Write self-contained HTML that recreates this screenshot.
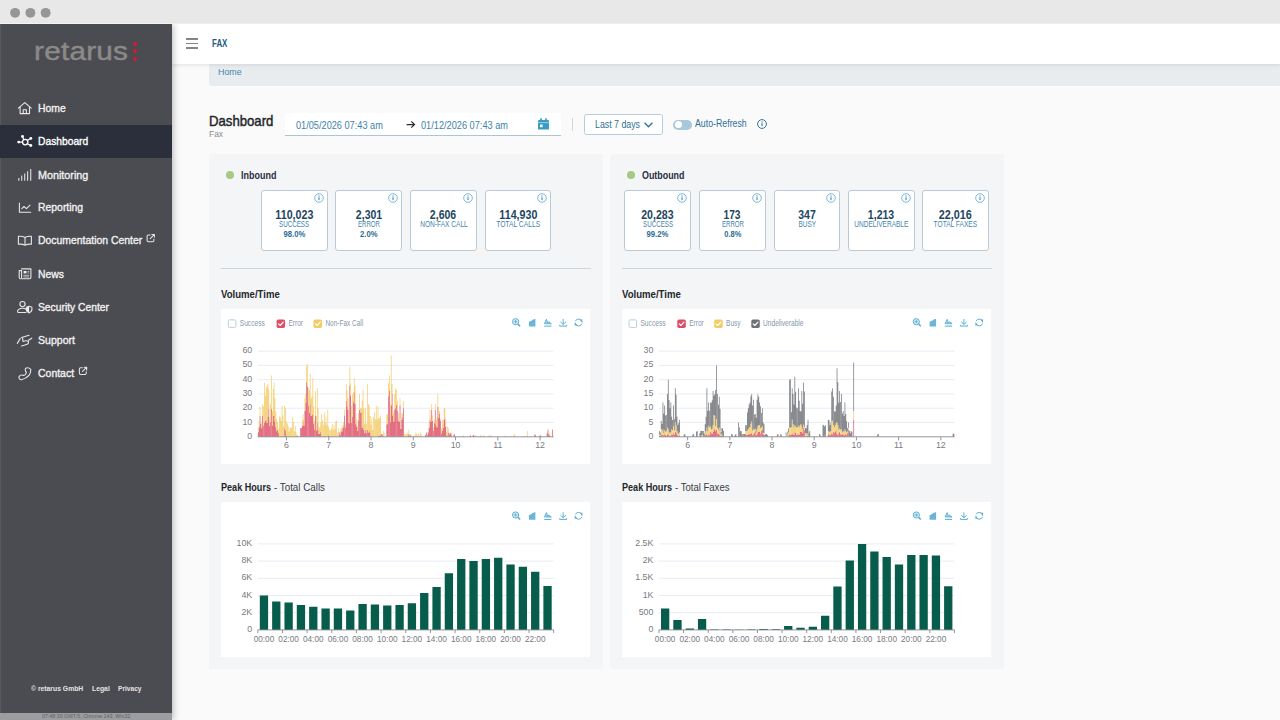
<!DOCTYPE html>
<html lang="en">
<head>
<meta charset="utf-8">
<title>retarus - Fax Dashboard</title>
<style>
html,body{margin:0;padding:0;}
body{width:1280px;height:720px;overflow:hidden;background:#fafafa;font-family:"Liberation Sans",sans-serif;}
#root{position:relative;width:1280px;height:720px;overflow:hidden;background:#fafafa;}
.t{position:absolute;white-space:nowrap;line-height:1;display:block;}
.b{position:absolute;box-sizing:border-box;}
svg{position:absolute;overflow:visible;}
</style>
</head>
<body>
<div id="root">
<div id="window-titlebar">
<div class="b" style="left:0.00px;top:0.00px;width:1280.00px;height:24.00px;background:#e8e8e8;"></div>
<div class="b" style="left:0.00px;top:23.00px;width:1280.00px;height:1.00px;background:#f3f3f3;"></div>
<svg style="left:0;top:0" width="60" height="24" viewBox="0 0 60 24"><circle cx="15.1" cy="12.85" r="4.95" fill="#969698"/><circle cx="30.4" cy="12.85" r="4.95" fill="#969698"/><circle cx="45.65" cy="12.85" r="4.95" fill="#969698"/></svg>
</div>
<header id="app-header">
<div class="b" style="left:172.00px;top:64.00px;width:1108.00px;height:656.00px;background:#fafafa;"></div>
<div class="b" style="left:209.00px;top:64.00px;width:1080.00px;height:21.60px;background:#e9ecef;border-radius:0 0 0 3px;"></div>
<span class="t" style="left:217.70px;top:67.37px;font-size:9.60px;color:#3f86ad;transform:scaleX(0.9216);transform-origin:left center;">Home</span>
<div class="b" style="left:172.00px;top:24.00px;width:1108.00px;height:40.00px;background:#fff;box-shadow:0 1px 4px rgba(0,0,0,0.10);"></div>
<div class="b" style="left:185.60px;top:38.40px;width:12.40px;height:1.40px;background:#83848a;"></div>
<div class="b" style="left:185.60px;top:42.80px;width:12.40px;height:1.40px;background:#83848a;"></div>
<div class="b" style="left:185.60px;top:47.20px;width:12.40px;height:1.40px;background:#83848a;"></div>
<span class="t" style="left:211.50px;top:38.87px;font-size:10.20px;color:#1d5c86;font-weight:bold;transform:scaleX(0.7763);transform-origin:left center;">FAX</span>
</header>
<aside id="sidebar"><nav>
<div class="b" style="left:0;top:24px;width:200px;height:696px;overflow:hidden;"><div class="b" style="left:0;top:0;width:172.3px;height:696px;background:#4b4c51;box-shadow:1px 0 7px rgba(0,0,0,0.28);"></div></div>
<div class="b" style="left:0.00px;top:24.00px;width:1.00px;height:696.00px;background:#58595e;"></div>
<div class="b" style="left:0.00px;top:124.70px;width:172.30px;height:33.10px;background:#2a2f3b;"></div>
<span class="t" style="left:34.10px;top:38.71px;font-size:25.50px;color:#8b8a87;-webkit-text-stroke:0.45px #8b8a87;transform:scaleX(1.1667);transform-origin:left center;letter-spacing:0.2px;">retarus</span>
<div class="b" style="left:132.50px;top:41.70px;width:4.20px;height:4.20px;background:#d8192f;border-radius:50%;"></div>
<div class="b" style="left:132.50px;top:49.20px;width:4.20px;height:4.20px;background:#d8192f;border-radius:50%;"></div>
<div class="b" style="left:132.50px;top:56.70px;width:4.20px;height:4.20px;background:#d8192f;border-radius:50%;"></div>
<span class="t" style="left:38.00px;top:102.82px;font-size:11.20px;color:#f1f1f1;-webkit-text-stroke:0.35px #f1f1f1;transform:scaleX(0.9305);transform-origin:left center;">Home</span>
<span class="t" style="left:38.00px;top:136.12px;font-size:11.20px;color:#ffffff;-webkit-text-stroke:0.35px #ffffff;transform:scaleX(0.9180);transform-origin:left center;">Dashboard</span>
<span class="t" style="left:38.00px;top:169.62px;font-size:11.20px;color:#f1f1f1;-webkit-text-stroke:0.35px #f1f1f1;transform:scaleX(0.9619);transform-origin:left center;">Monitoring</span>
<span class="t" style="left:38.00px;top:202.42px;font-size:11.20px;color:#f1f1f1;-webkit-text-stroke:0.35px #f1f1f1;transform:scaleX(0.9307);transform-origin:left center;">Reporting</span>
<span class="t" style="left:38.00px;top:235.12px;font-size:11.20px;color:#f1f1f1;-webkit-text-stroke:0.35px #f1f1f1;transform:scaleX(0.9307);transform-origin:left center;">Documentation Center</span>
<span class="t" style="left:38.00px;top:268.52px;font-size:11.20px;color:#f1f1f1;-webkit-text-stroke:0.35px #f1f1f1;transform:scaleX(0.9284);transform-origin:left center;">News</span>
<span class="t" style="left:38.00px;top:302.12px;font-size:11.20px;color:#f1f1f1;-webkit-text-stroke:0.35px #f1f1f1;transform:scaleX(0.9198);transform-origin:left center;">Security Center</span>
<span class="t" style="left:38.00px;top:334.92px;font-size:11.20px;color:#f1f1f1;-webkit-text-stroke:0.35px #f1f1f1;transform:scaleX(0.9432);transform-origin:left center;">Support</span>
<span class="t" style="left:38.00px;top:367.92px;font-size:11.20px;color:#f1f1f1;-webkit-text-stroke:0.35px #f1f1f1;transform:scaleX(0.9353);transform-origin:left center;">Contact</span>
<span class="t" style="left:31.20px;top:685.04px;font-size:7.40px;color:#e4e4e4;font-weight:bold;transform:scaleX(0.9199);transform-origin:left center;">© retarus GmbH</span>
<span class="t" style="left:91.70px;top:685.04px;font-size:7.40px;color:#e4e4e4;font-weight:bold;transform:scaleX(0.9209);transform-origin:left center;">Legal</span>
<span class="t" style="left:117.70px;top:685.04px;font-size:7.40px;color:#e4e4e4;font-weight:bold;transform:scaleX(0.8924);transform-origin:left center;">Privacy</span>
<div class="b" style="left:0.00px;top:712.50px;width:172.30px;height:7.50px;background:#9b9da0;"></div>
<span class="t" style="left:42.00px;top:714.26px;font-size:5.60px;color:#5d5f63;transform:scaleX(0.9477);transform-origin:left center;">07:48:30 GMT-5, Chrome 143, Win32</span>
<svg style="left:0;top:0" width="172" height="720" viewBox="0 0 172 720" fill="none" stroke="#e6e6e6" stroke-width="1.1" stroke-linecap="round" stroke-linejoin="round">
<path d="M18.4 108.1L24.8 102.6L31.2 108.1M20.1 107.2V113.6H29.5V107.2M23.2 113.6V109.7H26.4V113.6"/>
<g stroke="#fff"><circle cx="25.2" cy="142.1" r="2.7" stroke-width="1.3"/><path d="M22.5 142.1H19.4M23.9 139.8L22.8 137.3M27.3 140.4L30.2 138.7M27.3 143.8L30.2 145.2" stroke-width="1.2"/></g>
<g fill="#fff" stroke="none"><circle cx="18.7" cy="142.1" r="1.45"/><circle cx="22.5" cy="136.5" r="1.45"/><circle cx="30.8" cy="138.4" r="1.45"/><circle cx="30.8" cy="145.5" r="1.45"/></g>
<path d="M18.8 180.8V178.1M21.7 180.8V175.6M24.7 180.8V173.4M27.6 180.8V171.3M30.7 180.8V169" stroke="#d9d9d9" stroke-width="1.15" stroke-linecap="butt"/>
<path d="M19.4 203V212.2H30.7M21.8 208.7L24 206.5L26.4 208.6L30 205.1"/>
<path d="M25 237.4Q22 235.9 18.4 236.4V244.3Q22 243.8 25 245.2Q28 243.8 31.4 244.3V236.4Q28 235.9 25 237.4ZM25 237.4V245"/>
<path d="M21.6 268.9H30.9V277.6Q30.9 278.8 29.7 278.8H20.4Q19.2 278.8 19.2 277.6V270.6H21.6V277.4"/>
<rect x="23.6" y="271" width="2.9" height="2.4" fill="#f0f0f0" stroke="none"/><path d="M23.8 275.3H28.8M23.8 277H28.8M27.9 271.4H28.8M27.9 273H28.8" stroke-width="0.9" stroke="#cfcfcf"/>
<circle cx="22.5" cy="304.1" r="2.6"/><path d="M26.3 309.2Q24.8 308.2 22.5 308.2Q18.2 308.2 17.5 311.4Q17.4 312.5 18.5 312.5H26"/>
<path d="M29.1 306.3L31.9 307.3V309.6Q31.9 311.8 29.1 312.9Q26.3 311.8 26.3 309.6V307.3Z"/><path d="M29.1 306.6V312.6Q26.6 311.6 26.6 309.6V307.5Z" fill="#f0f0f0" stroke="none"/>
<path d="M17.3 343.4L20.3 338.4M21.6 337.5L29 335.2M22.6 338.1L23 341.4Q26.8 340.1 28.4 341.5Q29.2 343.9 25.6 344.8L21.6 346M31.8 338.2L28.6 340.3"/>
<path d="M25.6 368.2Q28.5 366.8 30.8 369.3Q31.3 377 21.5 379.7Q18.6 379.6 19 376.6Q20.5 374.3 22.8 375.2Q24.5 375.8 25.6 374.2Q27 372.4 25.5 371Q24.7 369.5 25.6 368.2Z"/>
<path d="M150.00 234.90H148.30Q147.10 234.90 147.10 236.10V240.50Q147.10 241.70 148.30 241.70H152.70Q153.90 241.70 153.90 240.50V238.90" stroke-width="1.05"/>
<path d="M150.20 238.60L154.20 234.60M151.80 234.50H154.40V237.10" stroke-width="1.05"/>
<path d="M82.30 367.70H80.60Q79.40 367.70 79.40 368.90V373.30Q79.40 374.50 80.60 374.50H85.00Q86.20 374.50 86.20 373.30V371.70" stroke-width="1.05"/>
<path d="M82.50 371.40L86.50 367.40M84.10 367.30H86.70V369.90" stroke-width="1.05"/>
</svg>
</nav></aside>
<main id="dashboard">
<span class="t" style="left:209.00px;top:113.71px;font-size:14.40px;color:#24262b;-webkit-text-stroke:0.45px #24262b;transform:scaleX(0.9141);transform-origin:left center;">Dashboard</span>
<span class="t" style="left:209.00px;top:129.47px;font-size:9.60px;color:#8b8d92;transform:scaleX(0.8748);transform-origin:left center;">Fax</span>
<div class="b" style="left:284.70px;top:113.30px;width:276.10px;height:22.40px;background:#fff;border-bottom:1px solid #a9c6d6;border-radius:2px 2px 0 0;"></div>
<span class="t" style="left:296.00px;top:120.94px;font-size:10.00px;color:#4083ab;transform:scaleX(0.9183);transform-origin:left center;">01/05/2026 07:43 am</span>
<span class="t" style="left:421.00px;top:120.94px;font-size:10.00px;color:#4083ab;transform:scaleX(0.9204);transform-origin:left center;">01/12/2026 07:43 am</span>
<svg style="left:406.4px;top:119.7px" width="10" height="9" viewBox="0 0 10 9"><path d="M0.6 4.5H8.3M5.3 1.4L8.5 4.5L5.3 7.6" fill="none" stroke="#2b2d33" stroke-width="1.25"/></svg>
<svg style="left:537.5px;top:118.2px" width="11" height="12" viewBox="0 0 11 12"><path d="M0 3.2Q0 2 1.2 2H9.8Q11 2 11 3.2V10.4Q11 11.6 9.8 11.6H1.2Q0 11.6 0 10.4Z" fill="#3a9cc5"/><rect x="2.2" y="0.2" width="1.7" height="3" rx="0.5" fill="#3a9cc5"/><rect x="7.1" y="0.2" width="1.7" height="3" rx="0.5" fill="#3a9cc5"/><rect x="0" y="4.2" width="11" height="0.9" fill="#fff" opacity="0.55"/><rect x="2" y="6.6" width="2.6" height="2.6" fill="#fff"/></svg>
<div class="b" style="left:572.20px;top:118.00px;width:1.00px;height:13.00px;background:#d3d7db;"></div>
<div class="b" style="left:584.30px;top:113.70px;width:78.50px;height:21.20px;background:#fff;border:1px solid #b5cedb;border-radius:2.5px;"></div>
<span class="t" style="left:594.60px;top:119.84px;font-size:10.00px;color:#2f7098;transform:scaleX(0.8799);transform-origin:left center;">Last 7 days</span>
<svg style="left:644px;top:122px" width="9" height="6" viewBox="0 0 9 6"><path d="M0.6 0.7L4.5 4.7L8.4 0.7" fill="none" stroke="#2f7098" stroke-width="1.3"/></svg>
<div class="b" style="left:673.00px;top:120.10px;width:18.70px;height:9.50px;background:#a9c8d9;border-radius:5px;"></div>
<div class="b" style="left:674.90px;top:121.40px;width:7.00px;height:7.00px;background:#fff;border-radius:50%;"></div>
<span class="t" style="left:695.00px;top:118.63px;font-size:10.00px;color:#2f7098;transform:scaleX(0.8775);transform-origin:left center;">Auto-Refresh</span>
<svg style="left:756.00px;top:117.50px" width="12" height="12" viewBox="-6 -6 12 12"><circle r="4.40" fill="#fff" stroke="#2f7098" stroke-width="1.00"/><rect x="-0.55" y="-0.8" width="1.1" height="2.9" fill="#2f7098"/><circle cx="0" cy="-2.1" r="0.65" fill="#2f7098"/></svg>
<div class="b" style="left:209.00px;top:154.00px;width:394.00px;height:514.80px;background:#f4f5f7;border-radius:3px;"></div>
<div class="b" style="left:226.00px;top:170.80px;width:8.00px;height:8.00px;background:#a6c984;border-radius:50%;"></div>
<span class="t" style="left:240.90px;top:169.57px;font-size:10.90px;color:#2a2d44;font-weight:bold;transform:scaleX(0.8237);transform-origin:left center;">Inbound</span>
<div class="b" style="left:221.00px;top:267.60px;width:369.50px;height:1.00px;background:#ccd6de;"></div>
<div class="b" style="left:261.20px;top:190.30px;width:66.40px;height:60.40px;background:#fff;border:1px solid #b9c9d8;border-radius:3px;"></div>
<svg style="left:312.60px;top:191.50px" width="12" height="12" viewBox="-6 -6 12 12"><circle r="4.30" fill="#fff" stroke="#62aed3" stroke-width="0.85"/><rect x="-0.55" y="-0.8" width="1.1" height="2.9" fill="#3d8db8"/><circle cx="0" cy="-2.1" r="0.65" fill="#3d8db8"/></svg>
<span class="t" style="left:273.14px;top:208.84px;font-size:12.00px;color:#1e4562;font-weight:bold;transform:scaleX(0.8896);transform-origin:center center;">110,023</span>
<span class="t" style="left:274.44px;top:220.17px;font-size:8.30px;color:#3f84ad;transform:scaleX(0.7526);transform-origin:center center;">SUCCESS</span>
<span class="t" style="left:281.03px;top:229.36px;font-size:9.50px;color:#2f6d94;font-weight:bold;transform:scaleX(0.8093);transform-origin:center center;">98.0%</span>
<div class="b" style="left:335.30px;top:190.30px;width:66.40px;height:60.40px;background:#fff;border:1px solid #b9c9d8;border-radius:3px;"></div>
<svg style="left:386.70px;top:191.50px" width="12" height="12" viewBox="-6 -6 12 12"><circle r="4.30" fill="#fff" stroke="#62aed3" stroke-width="0.85"/><rect x="-0.55" y="-0.8" width="1.1" height="2.9" fill="#3d8db8"/><circle cx="0" cy="-2.1" r="0.65" fill="#3d8db8"/></svg>
<span class="t" style="left:353.59px;top:208.84px;font-size:12.00px;color:#1e4562;font-weight:bold;transform:scaleX(0.8758);transform-origin:center center;">2,301</span>
<span class="t" style="left:353.61px;top:220.17px;font-size:8.30px;color:#3f84ad;transform:scaleX(0.7340);transform-origin:center center;">ERROR</span>
<span class="t" style="left:357.77px;top:229.36px;font-size:9.50px;color:#2f6d94;font-weight:bold;transform:scaleX(0.8082);transform-origin:center center;">2.0%</span>
<div class="b" style="left:410.20px;top:190.30px;width:66.40px;height:60.40px;background:#fff;border:1px solid #b9c9d8;border-radius:3px;"></div>
<svg style="left:461.60px;top:191.50px" width="12" height="12" viewBox="-6 -6 12 12"><circle r="4.30" fill="#fff" stroke="#62aed3" stroke-width="0.85"/><rect x="-0.55" y="-0.8" width="1.1" height="2.9" fill="#3d8db8"/><circle cx="0" cy="-2.1" r="0.65" fill="#3d8db8"/></svg>
<span class="t" style="left:428.49px;top:208.84px;font-size:12.00px;color:#1e4562;font-weight:bold;transform:scaleX(0.8758);transform-origin:center center;">2,606</span>
<span class="t" style="left:413.52px;top:220.17px;font-size:8.30px;color:#3f84ad;transform:scaleX(0.7922);transform-origin:center center;">NON-FAX CALL</span>
<div class="b" style="left:484.90px;top:190.30px;width:66.40px;height:60.40px;background:#fff;border:1px solid #b9c9d8;border-radius:3px;"></div>
<svg style="left:536.30px;top:191.50px" width="12" height="12" viewBox="-6 -6 12 12"><circle r="4.30" fill="#fff" stroke="#62aed3" stroke-width="0.85"/><rect x="-0.55" y="-0.8" width="1.1" height="2.9" fill="#3d8db8"/><circle cx="0" cy="-2.1" r="0.65" fill="#3d8db8"/></svg>
<span class="t" style="left:496.84px;top:208.84px;font-size:12.00px;color:#1e4562;font-weight:bold;transform:scaleX(0.8896);transform-origin:center center;">114,930</span>
<span class="t" style="left:491.06px;top:220.17px;font-size:8.30px;color:#3f84ad;transform:scaleX(0.8106);transform-origin:center center;">TOTAL CALLS</span>
<div class="b" style="left:610.00px;top:154.00px;width:394.00px;height:514.80px;background:#f4f5f7;border-radius:3px;"></div>
<div class="b" style="left:627.00px;top:170.80px;width:8.00px;height:8.00px;background:#a6c984;border-radius:50%;"></div>
<span class="t" style="left:641.90px;top:169.57px;font-size:10.90px;color:#2a2d44;font-weight:bold;transform:scaleX(0.8164);transform-origin:left center;">Outbound</span>
<div class="b" style="left:622.00px;top:267.60px;width:369.50px;height:1.00px;background:#ccd6de;"></div>
<div class="b" style="left:624.30px;top:190.30px;width:66.40px;height:60.40px;background:#fff;border:1px solid #b9c9d8;border-radius:3px;"></div>
<svg style="left:675.70px;top:191.50px" width="12" height="12" viewBox="-6 -6 12 12"><circle r="4.30" fill="#fff" stroke="#62aed3" stroke-width="0.85"/><rect x="-0.55" y="-0.8" width="1.1" height="2.9" fill="#3d8db8"/><circle cx="0" cy="-2.1" r="0.65" fill="#3d8db8"/></svg>
<span class="t" style="left:639.25px;top:208.84px;font-size:12.00px;color:#1e4562;font-weight:bold;transform:scaleX(0.8800);transform-origin:center center;">20,283</span>
<span class="t" style="left:637.54px;top:220.17px;font-size:8.30px;color:#3f84ad;transform:scaleX(0.7526);transform-origin:center center;">SUCCESS</span>
<span class="t" style="left:644.13px;top:229.36px;font-size:9.50px;color:#2f6d94;font-weight:bold;transform:scaleX(0.8093);transform-origin:center center;">99.2%</span>
<div class="b" style="left:699.20px;top:190.30px;width:66.40px;height:60.40px;background:#fff;border:1px solid #b9c9d8;border-radius:3px;"></div>
<svg style="left:750.60px;top:191.50px" width="12" height="12" viewBox="-6 -6 12 12"><circle r="4.30" fill="#fff" stroke="#62aed3" stroke-width="0.85"/><rect x="-0.55" y="-0.8" width="1.1" height="2.9" fill="#3d8db8"/><circle cx="0" cy="-2.1" r="0.65" fill="#3d8db8"/></svg>
<span class="t" style="left:722.49px;top:208.84px;font-size:12.00px;color:#1e4562;font-weight:bold;transform:scaleX(0.8491);transform-origin:center center;">173</span>
<span class="t" style="left:717.51px;top:220.17px;font-size:8.30px;color:#3f84ad;transform:scaleX(0.7340);transform-origin:center center;">ERROR</span>
<span class="t" style="left:721.67px;top:229.36px;font-size:9.50px;color:#2f6d94;font-weight:bold;transform:scaleX(0.7851);transform-origin:center center;">0.8%</span>
<div class="b" style="left:773.70px;top:190.30px;width:66.40px;height:60.40px;background:#fff;border:1px solid #b9c9d8;border-radius:3px;"></div>
<svg style="left:825.10px;top:191.50px" width="12" height="12" viewBox="-6 -6 12 12"><circle r="4.30" fill="#fff" stroke="#62aed3" stroke-width="0.85"/><rect x="-0.55" y="-0.8" width="1.1" height="2.9" fill="#3d8db8"/><circle cx="0" cy="-2.1" r="0.65" fill="#3d8db8"/></svg>
<span class="t" style="left:796.99px;top:208.84px;font-size:12.00px;color:#1e4562;font-weight:bold;transform:scaleX(0.8740);transform-origin:center center;">347</span>
<span class="t" style="left:795.70px;top:220.17px;font-size:8.30px;color:#3f84ad;transform:scaleX(0.7742);transform-origin:center center;">BUSY</span>
<div class="b" style="left:848.20px;top:190.30px;width:66.40px;height:60.40px;background:#fff;border:1px solid #b9c9d8;border-radius:3px;"></div>
<svg style="left:899.60px;top:191.50px" width="12" height="12" viewBox="-6 -6 12 12"><circle r="4.30" fill="#fff" stroke="#62aed3" stroke-width="0.85"/><rect x="-0.55" y="-0.8" width="1.1" height="2.9" fill="#3d8db8"/><circle cx="0" cy="-2.1" r="0.65" fill="#3d8db8"/></svg>
<span class="t" style="left:866.49px;top:208.84px;font-size:12.00px;color:#1e4562;font-weight:bold;transform:scaleX(0.8758);transform-origin:center center;">1,213</span>
<span class="t" style="left:847.13px;top:220.17px;font-size:8.30px;color:#3f84ad;transform:scaleX(0.7856);transform-origin:center center;">UNDELIVERABLE</span>
<div class="b" style="left:922.40px;top:190.30px;width:66.40px;height:60.40px;background:#fff;border:1px solid #b9c9d8;border-radius:3px;"></div>
<svg style="left:973.80px;top:191.50px" width="12" height="12" viewBox="-6 -6 12 12"><circle r="4.30" fill="#fff" stroke="#62aed3" stroke-width="0.85"/><rect x="-0.55" y="-0.8" width="1.1" height="2.9" fill="#3d8db8"/><circle cx="0" cy="-2.1" r="0.65" fill="#3d8db8"/></svg>
<span class="t" style="left:937.35px;top:208.84px;font-size:12.00px;color:#1e4562;font-weight:bold;transform:scaleX(0.8991);transform-origin:center center;">22,016</span>
<span class="t" style="left:928.33px;top:220.17px;font-size:8.30px;color:#3f84ad;transform:scaleX(0.7947);transform-origin:center center;">TOTAL FAXES</span>
<div class="b" style="left:221.30px;top:309.30px;width:369.20px;height:154.70px;background:#fff;"></div>
<div class="b" style="left:221.30px;top:502.30px;width:369.20px;height:154.70px;background:#fff;"></div>
<div class="b" style="left:622.30px;top:309.30px;width:369.20px;height:154.70px;background:#fff;"></div>
<div class="b" style="left:622.30px;top:502.30px;width:369.20px;height:154.70px;background:#fff;"></div>
<span class="t" style="left:221.20px;top:289.43px;font-size:10.60px;color:#24262b;font-weight:bold;transform:scaleX(0.9047);transform-origin:left center;">Volume/Time</span>
<span class="t" style="left:622.20px;top:289.43px;font-size:10.60px;color:#24262b;font-weight:bold;transform:scaleX(0.9047);transform-origin:left center;">Volume/Time</span>
<span class="t" style="left:221.20px;top:482.43px;font-size:10.60px;color:#24262b;font-weight:bold;transform:scaleX(0.8572);transform-origin:left center;">Peak Hours</span>
<span class="t" style="left:274.00px;top:482.43px;font-size:10.60px;color:#3a3c42;transform:scaleX(0.9242);transform-origin:left center;">- Total Calls</span>
<span class="t" style="left:622.20px;top:482.43px;font-size:10.60px;color:#24262b;font-weight:bold;transform:scaleX(0.8572);transform-origin:left center;">Peak Hours</span>
<span class="t" style="left:675.00px;top:482.43px;font-size:10.60px;color:#3a3c42;transform:scaleX(0.9010);transform-origin:left center;">- Total Faxes</span>
<svg style="left:0;top:0" width="1280" height="720" viewBox="0 0 1280 720" font-family="'Liberation Sans',sans-serif">
<g fill="none" stroke="#5aaed4" stroke-width="0.95"><circle cx="515.60" cy="321.70" r="3.1" fill="#d3e9f3"/><path d="M518.00 324.10L520.10 326.20" stroke-width="1.5"/><path d="M514.10 321.70h3M515.60 320.20v3" stroke-width="0.9"/></g><path d="M528.90 326.50v-4.9h1.6v-0.9h1.6v-0.9h1.6v-0.9h1.7v7.6z" fill="#6ab5d8"/><g fill="none" stroke="#5aaed4"><path d="M544.20 326.10h7.2" stroke-width="1.05"/><path d="M544.40 323.60l2.1 -4.3l1.2 3.8l1.1 -1.4l2.6 2.1z" stroke-width="0.9" stroke-linejoin="round" fill="#a9d4e8"/></g><g fill="none" stroke="#5aaed4" stroke-width="0.95"><path d="M563.20 319.00v5.4M560.40 321.80l2.8 2.6l2.8 -2.6"/><path d="M559.70 324.90v1.2h7v-1.2" stroke-width="1.0"/></g><circle cx="578.55" cy="322.50" r="3.45" fill="none" stroke="#5aaed4" stroke-width="1.0" stroke-dasharray="9.3 1.54" stroke-dashoffset="-1.2"/><path d="M582.30 321.90l0.1 -2.6l-2.5 1.0z" fill="#5aaed4"/><path d="M574.80 323.10l-0.1 2.6l2.5 -1.0z" fill="#5aaed4"/>
<rect x="228.35" y="319.85" width="7.6" height="7.6" rx="1.4" fill="#fff" stroke="#b4c8d8" stroke-width="0.9"/>
<text x="239.70" y="326.10" font-size="8.20" text-anchor="start" fill="#8797ab" textLength="25.20" lengthAdjust="spacingAndGlyphs">Success</text>
<rect x="276.60" y="319.40" width="8.5" height="8.5" rx="1.6" fill="#dd4f67"/>
<path d="M278.50 323.80l1.7 1.7l3.0 -3.3" fill="none" stroke="#fff" stroke-width="1.15" stroke-linecap="round" stroke-linejoin="round"/>
<text x="288.50" y="326.10" font-size="8.20" text-anchor="start" fill="#8797ab" textLength="14.50" lengthAdjust="spacingAndGlyphs">Error</text>
<rect x="313.50" y="319.40" width="8.5" height="8.5" rx="1.6" fill="#f4cc66"/>
<path d="M315.40 323.80l1.7 1.7l3.0 -3.3" fill="none" stroke="#fff" stroke-width="1.15" stroke-linecap="round" stroke-linejoin="round"/>
<text x="325.40" y="326.10" font-size="8.20" text-anchor="start" fill="#8797ab" textLength="37.80" lengthAdjust="spacingAndGlyphs">Non-Fax Call</text>
<text x="252.20" y="438.80" font-size="8.80" text-anchor="end" fill="#787a82">0</text>
<path d="M257.80 422.52H553.70" stroke="#e2e7f2" stroke-width="0.8"/>
<text x="252.20" y="424.52" font-size="8.80" text-anchor="end" fill="#787a82">10</text>
<path d="M257.80 408.23H553.70" stroke="#e2e7f2" stroke-width="0.8"/>
<text x="252.20" y="410.23" font-size="8.80" text-anchor="end" fill="#787a82">20</text>
<path d="M257.80 393.95H553.70" stroke="#e2e7f2" stroke-width="0.8"/>
<text x="252.20" y="395.95" font-size="8.80" text-anchor="end" fill="#787a82">30</text>
<path d="M257.80 379.67H553.70" stroke="#e2e7f2" stroke-width="0.8"/>
<text x="252.20" y="381.67" font-size="8.80" text-anchor="end" fill="#787a82">40</text>
<path d="M257.80 365.38H553.70" stroke="#e2e7f2" stroke-width="0.8"/>
<text x="252.20" y="367.38" font-size="8.80" text-anchor="end" fill="#787a82">50</text>
<path d="M257.80 351.10H553.70" stroke="#e2e7f2" stroke-width="0.8"/>
<text x="252.20" y="353.10" font-size="8.80" text-anchor="end" fill="#787a82">60</text>
<path d="M257.89 436.80v-4.48h0.70v4.48zM258.77 436.80v-9.57h0.70v9.57zM259.65 436.80v-20.71h0.70v20.71zM260.53 436.80v-13.34h0.70v13.34zM261.41 436.80v-8.56h0.70v8.56zM262.29 436.80v-20.71h0.70v20.71zM263.17 436.80v-10.78h0.70v10.78zM264.05 436.80v-14.28h0.70v14.28zM264.93 436.80v-16.01h0.70v16.01zM265.81 436.80v-17.14h0.70v17.14zM266.69 436.80v-13.89h0.70v13.89zM267.58 436.80v-20.00h0.70v20.00zM268.46 436.80v-28.00h0.70v28.00zM269.34 436.80v-10.69h0.70v10.69zM270.22 436.80v-14.83h0.70v14.83zM271.10 436.80v-28.00h0.70v28.00zM271.98 436.80v-10.97h0.70v10.97zM272.86 436.80v-20.71h0.70v20.71zM273.74 436.80v-20.71h0.70v20.71zM274.62 436.80v-15.38h0.70v15.38zM275.50 436.80v-9.43h0.70v9.43zM276.38 436.80v-5.46h0.70v5.46zM277.26 436.80v-6.86h0.70v6.86zM278.14 436.80v-3.86h0.70v3.86zM280.79 436.80v-0.62h0.70v0.62zM281.67 436.80v-0.86h0.70v0.86zM284.31 436.80v-8.14h0.70v8.14zM285.19 436.80v-6.40h0.70v6.40zM296.64 436.80v-1.43h0.70v1.43zM297.52 436.80v-0.63h0.70v0.63zM300.16 436.80v-8.77h0.70v8.77zM301.04 436.80v-8.57h0.70v8.57zM301.92 436.80v-10.46h0.70v10.46zM302.80 436.80v-14.28h0.70v14.28zM303.68 436.80v-11.00h0.70v11.00zM304.56 436.80v-25.71h0.70v25.71zM305.44 436.80v-34.10h0.70v34.10zM306.32 436.80v-54.28h0.70v54.28zM307.20 436.80v-49.99h0.70v49.99zM308.09 436.80v-31.51h0.70v31.51zM308.97 436.80v-24.03h0.70v24.03zM309.85 436.80v-32.85h0.70v32.85zM310.73 436.80v-20.85h0.70v20.85zM311.61 436.80v-21.54h0.70v21.54zM312.49 436.80v-22.85h0.70v22.85zM313.37 436.80v-13.36h0.70v13.36zM314.25 436.80v-7.17h0.70v7.17zM315.13 436.80v-21.42h0.70v21.42zM316.01 436.80v-6.32h0.70v6.32zM316.89 436.80v-14.28h0.70v14.28zM317.77 436.80v-6.43h0.70v6.43zM318.65 436.80v-2.75h0.70v2.75zM319.53 436.80v-2.96h0.70v2.96zM320.41 436.80v-5.00h0.70v5.00zM323.06 436.80v-0.47h0.70v0.47zM323.94 436.80v-0.71h0.70v0.71zM328.34 436.80v-1.43h0.70v1.43zM329.22 436.80v-0.73h0.70v0.73zM338.91 436.80v-4.29h0.70v4.29zM339.79 436.80v-1.59h0.70v1.59zM340.67 436.80v-5.71h0.70v5.71zM341.55 436.80v-5.11h0.70v5.11zM342.43 436.80v-8.51h0.70v8.51zM343.31 436.80v-10.00h0.70v10.00zM344.19 436.80v-21.42h0.70v21.42zM345.07 436.80v-9.19h0.70v9.19zM345.95 436.80v-35.71h0.70v35.71zM346.83 436.80v-30.36h0.70v30.36zM347.71 436.80v-27.14h0.70v27.14zM348.60 436.80v-13.47h0.70v13.47zM349.48 436.80v-51.42h0.70v51.42zM350.36 436.80v-41.22h0.70v41.22zM351.24 436.80v-13.75h0.70v13.75zM352.12 436.80v-20.00h0.70v20.00zM353.00 436.80v-34.63h0.70v34.63zM353.88 436.80v-44.28h0.70v44.28zM354.76 436.80v-32.85h0.70v32.85zM355.64 436.80v-12.60h0.70v12.60zM356.52 436.80v-10.00h0.70v10.00zM357.40 436.80v-5.78h0.70v5.78zM358.28 436.80v-16.66h0.70v16.66zM359.16 436.80v-27.14h0.70v27.14zM360.04 436.80v-24.28h0.70v24.28zM360.92 436.80v-24.49h0.70v24.49zM361.81 436.80v-8.88h0.70v8.88zM362.69 436.80v-11.43h0.70v11.43zM363.57 436.80v-7.14h0.70v7.14zM364.45 436.80v-3.43h0.70v3.43zM365.33 436.80v-7.14h0.70v7.14zM366.21 436.80v-3.74h0.70v3.74zM367.09 436.80v-7.14h0.70v7.14zM367.97 436.80v-4.18h0.70v4.18zM368.85 436.80v-5.71h0.70v5.71zM369.73 436.80v-4.48h0.70v4.48zM377.66 436.80v-1.43h0.70v1.43zM378.54 436.80v-0.68h0.70v0.68zM379.42 436.80v-1.16h0.70v1.16zM380.30 436.80v-1.43h0.70v1.43zM381.18 436.80v-2.86h0.70v2.86zM382.06 436.80v-2.11h0.70v2.11zM386.46 436.80v-12.23h0.70v12.23zM387.34 436.80v-12.85h0.70v12.85zM388.22 436.80v-40.54h0.70v40.54zM389.11 436.80v-45.71h0.70v45.71zM389.99 436.80v-14.43h0.70v14.43zM390.87 436.80v-31.42h0.70v31.42zM391.75 436.80v-42.85h0.70v42.85zM392.63 436.80v-21.07h0.70v21.07zM393.51 436.80v-14.99h0.70v14.99zM394.39 436.80v-27.14h0.70v27.14zM395.27 436.80v-28.57h0.70v28.57zM396.15 436.80v-31.87h0.70v31.87zM397.03 436.80v-25.71h0.70v25.71zM397.91 436.80v-15.90h0.70v15.90zM398.79 436.80v-14.99h0.70v14.99zM399.67 436.80v-31.42h0.70v31.42zM400.55 436.80v-7.92h0.70v7.92zM401.43 436.80v-17.14h0.70v17.14zM402.32 436.80v-19.51h0.70v19.51zM403.20 436.80v-28.57h0.70v28.57zM407.60 436.80v-1.42h0.70v1.42zM408.48 436.80v-2.86h0.70v2.86zM409.36 436.80v-1.12h0.70v1.12zM410.24 436.80v-1.43h0.70v1.43zM425.21 436.80v-1.87h0.70v1.87zM426.09 436.80v-4.29h0.70v4.29zM426.97 436.80v-1.62h0.70v1.62zM427.85 436.80v-4.29h0.70v4.29zM428.74 436.80v-8.80h0.70v8.80zM429.62 436.80v-17.14h0.70v17.14zM430.50 436.80v-15.05h0.70v15.05zM431.38 436.80v-27.14h0.70v27.14zM432.26 436.80v-15.71h0.70v15.71zM433.14 436.80v-6.21h0.70v6.21zM434.02 436.80v-13.67h0.70v13.67zM434.90 436.80v-27.14h0.70v27.14zM435.78 436.80v-11.43h0.70v11.43zM436.66 436.80v-9.33h0.70v9.33zM437.54 436.80v-29.99h0.70v29.99zM438.42 436.80v-18.68h0.70v18.68zM439.30 436.80v-22.85h0.70v22.85zM440.18 436.80v-16.10h0.70v16.10zM441.06 436.80v-3.27h0.70v3.27zM441.94 436.80v-5.71h0.70v5.71zM442.83 436.80v-8.71h0.70v8.71zM443.71 436.80v-17.14h0.70v17.14zM444.59 436.80v-18.57h0.70v18.57zM445.47 436.80v-10.07h0.70v10.07zM446.35 436.80v-0.68h0.70v0.68zM447.23 436.80v-1.43h0.70v1.43zM448.11 436.80v-4.29h0.70v4.29zM448.99 436.80v-2.05h0.70v2.05zM449.87 436.80v-3.57h0.70v3.57zM450.75 436.80v-3.41h0.70v3.41zM453.39 436.80v-1.51h0.70v1.51zM454.27 436.80v-2.86h0.70v2.86zM469.25 436.80v-0.45h0.70v0.45zM470.13 436.80v-1.43h0.70v1.43zM472.77 436.80v-1.71h0.70v1.71zM473.65 436.80v-1.26h0.70v1.26zM527.37 436.80v-0.71h0.70v0.71zM534.41 436.80v-2.14h0.70v2.14zM535.29 436.80v-1.65h0.70v1.65zM539.70 436.80v-1.43h0.70v1.43zM540.58 436.80v-1.16h0.70v1.16zM546.74 436.80v-3.60h0.70v3.60zM547.62 436.80v-7.14h0.70v7.14zM548.50 436.80v-2.14h0.70v2.14zM549.38 436.80v-1.34h0.70v1.34zM552.03 436.80v-7.14h0.70v7.14z" fill="#dd4f67"/>
<path d="M257.89 432.32v-3.89h0.70v3.89zM258.77 427.23v-6.14h0.70v6.14zM259.65 416.09v-9.28h0.70v9.28zM260.53 423.46v-4.86h0.70v4.86zM261.41 428.24v-3.95h0.70v3.95zM262.29 416.09v-12.14h0.70v12.14zM263.17 426.02v-20.07h0.70v20.07zM264.05 422.52v-39.99h0.70v39.99zM264.93 420.79v-25.02h0.70v25.02zM265.81 419.66v-32.14h0.70v32.14zM266.69 422.91v-36.85h0.70v36.85zM267.58 416.80v-32.85h0.70v32.85zM268.46 408.80v-19.85h0.70v19.85zM269.34 426.11v-8.62h0.70v8.62zM270.22 421.97v-18.25h0.70v18.25zM271.10 408.80v-33.42h0.70v33.42zM271.98 425.83v-14.34h0.70v14.34zM272.86 416.09v-27.14h0.70v27.14zM273.74 416.09v-33.57h0.70v33.57zM274.62 421.42v-23.27h0.70v23.27zM275.50 427.37v-16.00h0.70v16.00zM276.38 431.34v-12.17h0.70v12.17zM277.26 429.94v-8.00h0.70v8.00zM278.14 432.94v-4.38h0.70v4.38zM279.02 436.80v-20.35h0.70v20.35zM279.90 436.80v-20.00h0.70v20.00zM280.79 436.18v-15.42h0.70v15.42zM281.67 435.94v-30.28h0.70v30.28zM282.55 436.80v-21.42h0.70v21.42zM283.43 436.80v-10.60h0.70v10.60zM284.31 428.66v-23.00h0.70v23.00zM285.19 430.40v-22.44h0.70v22.44zM286.07 436.80v-15.43h0.70v15.43zM286.95 436.80v-13.25h0.70v13.25zM287.83 436.80v-10.86h0.70v10.86zM288.71 436.80v-5.42h0.70v5.42zM289.59 436.80v-8.55h0.70v8.55zM290.47 436.80v-9.57h0.70v9.57zM291.35 436.80v-8.88h0.70v8.88zM292.23 436.80v-19.71h0.70v19.71zM293.11 436.80v-14.85h0.70v14.85zM293.99 436.80v-5.58h0.70v5.58zM294.88 436.80v-10.86h0.70v10.86zM295.76 436.80v-4.88h0.70v4.88zM301.92 426.34v-6.49h0.70v6.49zM302.80 422.52v-8.57h0.70v8.57zM303.68 425.80v-5.50h0.70v5.50zM304.56 411.09v-12.85h0.70v12.85zM305.44 402.70v-8.96h0.70v8.96zM306.32 382.52v-17.14h0.70v17.14zM307.20 386.81v-22.85h0.70v22.85zM308.09 405.29v-17.43h0.70v17.43zM308.97 412.77v-22.62h0.70v22.62zM309.85 403.95v-29.99h0.70v29.99zM310.73 415.95v-17.71h0.70v17.71zM311.61 415.26v-19.13h0.70v19.13zM312.49 413.95v-35.71h0.70v35.71zM313.37 423.44v-17.19h0.70v17.19zM314.25 429.63v-8.99h0.70v8.99zM315.13 415.38v-24.28h0.70v24.28zM316.01 430.48v-14.57h0.70v14.57zM316.89 422.52v-34.28h0.70v34.28zM317.77 430.37v-22.14h0.70v22.14zM318.65 434.05v-7.52h0.70v7.52zM319.53 433.84v-5.90h0.70v5.90zM320.41 431.80v-9.28h0.70v9.28zM321.30 436.80v-22.85h0.70v22.85zM322.18 436.80v-16.54h0.70v16.54zM323.06 436.33v-11.91h0.70v11.91zM323.94 436.09v-23.57h0.70v23.57zM324.82 436.80v-14.06h0.70v14.06zM325.70 436.80v-20.00h0.70v20.00zM326.58 436.80v-11.63h0.70v11.63zM327.46 436.80v-27.14h0.70v27.14zM328.34 435.37v-8.57h0.70v8.57zM329.22 436.07v-6.10h0.70v6.10zM330.10 436.80v-6.47h0.70v6.47zM330.98 436.80v-8.57h0.70v8.57zM331.86 436.80v-12.85h0.70v12.85zM332.74 436.80v-6.53h0.70v6.53zM333.62 436.80v-11.43h0.70v11.43zM334.51 436.80v-7.88h0.70v7.88zM335.39 436.80v-15.71h0.70v15.71zM336.27 436.80v-16.06h0.70v16.06zM337.15 436.80v-4.18h0.70v4.18zM338.03 436.80v-8.57h0.70v8.57zM340.67 431.09v-2.86h0.70v2.86zM341.55 431.69v-3.28h0.70v3.28zM342.43 428.29v-3.33h0.70v3.33zM343.31 426.80v-4.29h0.70v4.29zM344.19 415.38v-5.71h0.70v5.71zM345.07 427.61v-3.15h0.70v3.15zM345.95 401.09v-17.14h0.70v17.14zM346.83 406.44v-16.02h0.70v16.02zM347.71 409.66v-11.43h0.70v11.43zM348.60 423.33v-6.40h0.70v6.40zM349.48 385.38v-18.57h0.70v18.57zM350.36 395.58v-12.34h0.70v12.34zM351.24 423.05v-17.01h0.70v17.01zM352.12 416.80v-22.85h0.70v22.85zM353.00 402.17v-10.05h0.70v10.05zM353.88 392.52v-14.28h0.70v14.28zM354.76 403.95v-18.57h0.70v18.57zM355.64 424.20v-10.89h0.70v10.89zM356.52 426.80v-7.14h0.70v7.14zM357.40 431.02v-4.43h0.70v4.43zM358.28 420.14v-7.43h0.70v7.43zM359.16 409.66v-15.71h0.70v15.71zM360.04 412.52v-4.29h0.70v4.29zM360.92 412.31v-4.05h0.70v4.05zM361.81 427.92v-27.15h0.70v27.15zM362.69 425.37v-35.71h0.70v35.71zM363.57 429.66v-21.42h0.70v21.42zM364.45 433.37v-9.96h0.70v9.96zM365.33 429.66v-21.42h0.70v21.42zM366.21 433.06v-9.31h0.70v9.31zM367.09 429.66v-45.71h0.70v45.71zM367.97 432.62v-28.68h0.70v28.68zM368.85 431.09v-25.71h0.70v25.71zM369.73 432.32v-16.34h0.70v16.34zM370.61 436.80v-12.38h0.70v12.38zM371.49 436.80v-18.57h0.70v18.57zM372.37 436.80v-6.71h0.70v6.71zM373.25 436.80v-20.00h0.70v20.00zM374.13 436.80v-24.28h0.70v24.28zM375.02 436.80v-17.48h0.70v17.48zM375.90 436.80v-31.42h0.70v31.42zM376.78 436.80v-17.29h0.70v17.29zM377.66 435.37v-28.57h0.70v28.57zM378.54 436.12v-17.89h0.70v17.89zM379.42 435.64v-17.52h0.70v17.52zM380.30 435.37v-20.00h0.70v20.00zM382.94 436.80v-5.71h0.70v5.71zM383.82 436.80v-3.68h0.70v3.68zM386.46 424.57v-9.80h0.70v9.80zM387.34 423.94v-10.00h0.70v10.00zM388.22 396.26v-13.29h0.70v13.29zM389.11 391.09v-15.71h0.70v15.71zM389.99 422.37v-18.01h0.70v18.01zM390.87 405.38v-49.99h0.70v49.99zM391.75 393.95v-10.00h0.70v10.00zM392.63 415.73v-5.20h0.70v5.20zM393.51 421.81v-8.43h0.70v8.43zM394.39 409.66v-15.71h0.70v15.71zM395.27 408.23v-20.00h0.70v20.00zM396.15 404.93v-14.86h0.70v14.86zM397.03 411.09v-10.00h0.70v10.00zM397.91 420.90v-7.95h0.70v7.95zM398.79 421.81v-3.57h0.70v3.57zM399.67 405.38v-7.14h0.70v7.14zM400.55 428.88v-4.13h0.70v4.13zM401.43 419.66v-7.14h0.70v7.14zM402.32 417.29v-3.67h0.70v3.67zM403.20 408.23v-7.14h0.70v7.14zM404.08 436.80v-2.86h0.70v2.86zM404.96 436.80v-1.60h0.70v1.60zM405.84 436.80v-2.77h0.70v2.77zM406.72 436.80v-4.29h0.70v4.29zM407.60 435.38v-1.61h0.70v1.61zM408.48 433.94v-4.29h0.70v4.29zM409.36 435.68v-1.07h0.70v1.07zM410.24 435.37v-1.43h0.70v1.43zM411.12 436.80v-1.43h0.70v1.43zM412.00 436.80v-0.73h0.70v0.73zM414.64 436.80v-2.17h0.70v2.17zM415.53 436.80v-4.29h0.70v4.29zM416.41 436.80v-2.86h0.70v2.86zM417.29 436.80v-1.38h0.70v1.38zM418.17 436.80v-3.57h0.70v3.57zM419.05 436.80v-1.23h0.70v1.23zM419.93 436.80v-4.29h0.70v4.29zM420.81 436.80v-2.88h0.70v2.88zM426.97 435.18v-0.50h0.70v0.50zM427.85 432.51v-1.43h0.70v1.43zM428.74 428.00v-6.61h0.70v6.61zM429.62 419.66v-10.00h0.70v10.00zM430.50 421.75v-3.54h0.70v3.54zM431.38 409.66v-5.71h0.70v5.71zM432.26 421.09v-5.71h0.70v5.71zM433.14 430.59v-3.52h0.70v3.52zM434.02 423.13v-3.64h0.70v3.64zM434.90 409.66v-5.71h0.70v5.71zM435.78 425.37v-8.57h0.70v8.57zM436.66 427.47v-7.25h0.70v7.25zM437.54 406.81v-12.85h0.70v12.85zM438.42 418.12v-8.82h0.70v8.82zM439.30 413.95v-2.86h0.70v2.86zM440.18 420.70v-1.89h0.70v1.89zM441.06 433.53v-5.36h0.70v5.36zM441.94 431.09v-11.43h0.70v11.43zM442.83 428.09v-4.41h0.70v4.41zM443.71 419.66v-11.43h0.70v11.43zM444.59 418.23v-10.00h0.70v10.00zM445.47 426.73v-5.50h0.70v5.50zM446.35 436.12v-4.24h0.70v4.24zM447.23 435.37v-8.57h0.70v8.57zM448.11 432.51v-4.29h0.70v4.29zM448.99 434.75v-1.83h0.70v1.83zM449.87 433.23v-0.71h0.70v0.71zM450.75 433.39v-0.57h0.70v0.57zM458.68 436.80v-1.00h0.70v1.00zM459.56 436.80v-0.55h0.70v0.55zM462.20 436.80v-0.45h0.70v0.45zM463.08 436.80v-1.43h0.70v1.43zM474.53 436.80v-1.06h0.70v1.06zM475.41 436.80v-1.43h0.70v1.43zM479.81 436.80v-1.43h0.70v1.43zM480.69 436.80v-1.51h0.70v1.51zM483.34 436.80v-1.43h0.70v1.43zM484.22 436.80v-0.76h0.70v0.76zM488.62 436.80v-1.43h0.70v1.43zM489.50 436.80v-0.91h0.70v0.91zM490.38 436.80v-1.43h0.70v1.43zM491.26 436.80v-1.14h0.70v1.14zM504.47 436.80v-1.00h0.70v1.00zM505.35 436.80v-0.80h0.70v0.80zM513.28 436.80v-1.21h0.70v1.21zM514.16 436.80v-2.86h0.70v2.86zM523.85 436.80v-0.71h0.70v0.71zM524.73 436.80v-0.34h0.70v0.34zM527.37 436.09v-5.00h0.70v5.00zM534.41 434.66v-0.71h0.70v0.71zM535.29 435.15v-0.40h0.70v0.40zM548.50 434.66v-2.86h0.70v2.86zM549.38 435.46v-1.31h0.70v1.31zM552.03 429.66v-0.71h0.70v0.71z" fill="#f4cc66"/>
<path d="M257.80 436.80H553.70" stroke="#888a92" stroke-width="0.9"/>
<path d="M286.47 436.80v3.6" stroke="#888a92" stroke-width="0.9"/>
<text x="286.47" y="448.40" font-size="8.80" text-anchor="middle" fill="#787a82">6</text>
<path d="M328.75 436.80v3.6" stroke="#888a92" stroke-width="0.9"/>
<text x="328.75" y="448.40" font-size="8.80" text-anchor="middle" fill="#787a82">7</text>
<path d="M371.02 436.80v3.6" stroke="#888a92" stroke-width="0.9"/>
<text x="371.02" y="448.40" font-size="8.80" text-anchor="middle" fill="#787a82">8</text>
<path d="M413.29 436.80v3.6" stroke="#888a92" stroke-width="0.9"/>
<text x="413.29" y="448.40" font-size="8.80" text-anchor="middle" fill="#787a82">9</text>
<path d="M455.56 436.80v3.6" stroke="#888a92" stroke-width="0.9"/>
<text x="455.56" y="448.40" font-size="8.80" text-anchor="middle" fill="#787a82">10</text>
<path d="M497.83 436.80v3.6" stroke="#888a92" stroke-width="0.9"/>
<text x="497.83" y="448.40" font-size="8.80" text-anchor="middle" fill="#787a82">11</text>
<path d="M540.10 436.80v3.6" stroke="#888a92" stroke-width="0.9"/>
<text x="540.10" y="448.40" font-size="8.80" text-anchor="middle" fill="#787a82">12</text>
<g fill="none" stroke="#5aaed4" stroke-width="0.95"><circle cx="916.30" cy="321.70" r="3.1" fill="#d3e9f3"/><path d="M918.70 324.10L920.80 326.20" stroke-width="1.5"/><path d="M914.80 321.70h3M916.30 320.20v3" stroke-width="0.9"/></g><path d="M929.60 326.50v-4.9h1.6v-0.9h1.6v-0.9h1.6v-0.9h1.7v7.6z" fill="#6ab5d8"/><g fill="none" stroke="#5aaed4"><path d="M944.90 326.10h7.2" stroke-width="1.05"/><path d="M945.10 323.60l2.1 -4.3l1.2 3.8l1.1 -1.4l2.6 2.1z" stroke-width="0.9" stroke-linejoin="round" fill="#a9d4e8"/></g><g fill="none" stroke="#5aaed4" stroke-width="0.95"><path d="M963.90 319.00v5.4M961.10 321.80l2.8 2.6l2.8 -2.6"/><path d="M960.40 324.90v1.2h7v-1.2" stroke-width="1.0"/></g><circle cx="979.25" cy="322.50" r="3.45" fill="none" stroke="#5aaed4" stroke-width="1.0" stroke-dasharray="9.3 1.54" stroke-dashoffset="-1.2"/><path d="M983.00 321.90l0.1 -2.6l-2.5 1.0z" fill="#5aaed4"/><path d="M975.50 323.10l-0.1 2.6l2.5 -1.0z" fill="#5aaed4"/>
<rect x="629.05" y="319.85" width="7.6" height="7.6" rx="1.4" fill="#fff" stroke="#b4c8d8" stroke-width="0.9"/>
<text x="640.40" y="326.10" font-size="8.20" text-anchor="start" fill="#8797ab" textLength="25.20" lengthAdjust="spacingAndGlyphs">Success</text>
<rect x="677.30" y="319.40" width="8.5" height="8.5" rx="1.6" fill="#dd4f67"/>
<path d="M679.20 323.80l1.7 1.7l3.0 -3.3" fill="none" stroke="#fff" stroke-width="1.15" stroke-linecap="round" stroke-linejoin="round"/>
<text x="689.20" y="326.10" font-size="8.20" text-anchor="start" fill="#8797ab" textLength="14.50" lengthAdjust="spacingAndGlyphs">Error</text>
<rect x="714.20" y="319.40" width="8.5" height="8.5" rx="1.6" fill="#f4cc66"/>
<path d="M716.10 323.80l1.7 1.7l3.0 -3.3" fill="none" stroke="#fff" stroke-width="1.15" stroke-linecap="round" stroke-linejoin="round"/>
<text x="726.10" y="326.10" font-size="8.20" text-anchor="start" fill="#8797ab" textLength="14.50" lengthAdjust="spacingAndGlyphs">Busy</text>
<rect x="751.30" y="319.40" width="8.5" height="8.5" rx="1.6" fill="#6f7176"/>
<path d="M753.20 323.80l1.7 1.7l3.0 -3.3" fill="none" stroke="#fff" stroke-width="1.15" stroke-linecap="round" stroke-linejoin="round"/>
<text x="763.00" y="326.10" font-size="8.20" text-anchor="start" fill="#8797ab" textLength="40.50" lengthAdjust="spacingAndGlyphs">Undeliverable</text>
<text x="653.40" y="438.80" font-size="8.80" text-anchor="end" fill="#787a82">0</text>
<path d="M659.00 422.52H954.40" stroke="#e2e7f2" stroke-width="0.8"/>
<text x="653.40" y="424.52" font-size="8.80" text-anchor="end" fill="#787a82">5</text>
<path d="M659.00 408.23H954.40" stroke="#e2e7f2" stroke-width="0.8"/>
<text x="653.40" y="410.23" font-size="8.80" text-anchor="end" fill="#787a82">10</text>
<path d="M659.00 393.95H954.40" stroke="#e2e7f2" stroke-width="0.8"/>
<text x="653.40" y="395.95" font-size="8.80" text-anchor="end" fill="#787a82">15</text>
<path d="M659.00 379.67H954.40" stroke="#e2e7f2" stroke-width="0.8"/>
<text x="653.40" y="381.67" font-size="8.80" text-anchor="end" fill="#787a82">20</text>
<path d="M659.00 365.38H954.40" stroke="#e2e7f2" stroke-width="0.8"/>
<text x="653.40" y="367.38" font-size="8.80" text-anchor="end" fill="#787a82">25</text>
<path d="M659.00 351.10H954.40" stroke="#e2e7f2" stroke-width="0.8"/>
<text x="653.40" y="353.10" font-size="8.80" text-anchor="end" fill="#787a82">30</text>
<path d="M659.09 436.80v-1.21h0.70v1.21zM659.97 436.80v-0.94h0.70v0.94zM660.85 436.80v-2.43h0.70v2.43zM661.73 436.80v-1.59h0.70v1.59zM662.60 436.80v-2.43h0.70v2.43zM663.48 436.80v-1.34h0.70v1.34zM664.36 436.80v-2.43h0.70v2.43zM665.24 436.80v-1.85h0.70v1.85zM666.12 436.80v-1.13h0.70v1.13zM667.00 436.80v-2.43h0.70v2.43zM667.88 436.80v-2.43h0.70v2.43zM668.76 436.80v-1.20h0.70v1.20zM669.64 436.80v-1.01h0.70v1.01zM670.52 436.80v-1.21h0.70v1.21zM671.40 436.80v-2.43h0.70v2.43zM672.28 436.80v-2.13h0.70v2.13zM673.15 436.80v-3.64h0.70v3.64zM674.03 436.80v-2.16h0.70v2.16zM674.91 436.80v-4.86h0.70v4.86zM675.79 436.80v-4.23h0.70v4.23zM676.67 436.80v-2.43h0.70v2.43zM677.55 436.80v-1.19h0.70v1.19zM678.43 436.80v-0.67h0.70v0.67zM679.31 436.80v-1.21h0.70v1.21zM704.80 436.80v-1.39h0.70v1.39zM705.68 436.80v-2.43h0.70v2.43zM706.56 436.80v-2.43h0.70v2.43zM707.44 436.80v-1.14h0.70v1.14zM708.32 436.80v-2.43h0.70v2.43zM709.20 436.80v-1.70h0.70v1.70zM710.08 436.80v-4.86h0.70v4.86zM710.96 436.80v-3.58h0.70v3.58zM711.84 436.80v-2.70h0.70v2.70zM712.72 436.80v-4.86h0.70v4.86zM713.60 436.80v-8.22h0.70v8.22zM714.48 436.80v-7.28h0.70v7.28zM715.35 436.80v-5.50h0.70v5.50zM716.23 436.80v-7.28h0.70v7.28zM717.11 436.80v-3.64h0.70v3.64zM717.99 436.80v-3.39h0.70v3.39zM718.87 436.80v-2.43h0.70v2.43zM719.75 436.80v-1.25h0.70v1.25zM720.63 436.80v-1.03h0.70v1.03zM721.51 436.80v-1.21h0.70v1.21zM741.73 436.80v-2.43h0.70v2.43zM742.61 436.80v-2.15h0.70v2.15zM745.25 436.80v-2.43h0.70v2.43zM746.13 436.80v-2.08h0.70v2.08zM747.00 436.80v-1.84h0.70v1.84zM747.88 436.80v-2.43h0.70v2.43zM748.76 436.80v-2.53h0.70v2.53zM749.64 436.80v-2.43h0.70v2.43zM750.52 436.80v-3.24h0.70v3.24zM751.40 436.80v-3.64h0.70v3.64zM752.28 436.80v-1.53h0.70v1.53zM753.16 436.80v-2.43h0.70v2.43zM754.04 436.80v-4.06h0.70v4.06zM754.92 436.80v-4.86h0.70v4.86zM755.80 436.80v-1.27h0.70v1.27zM756.68 436.80v-2.43h0.70v2.43zM757.55 436.80v-4.83h0.70v4.83zM758.43 436.80v-4.86h0.70v4.86zM759.31 436.80v-4.86h0.70v4.86zM760.19 436.80v-3.33h0.70v3.33zM761.07 436.80v-6.15h0.70v6.15zM761.95 436.80v-7.28h0.70v7.28zM762.83 436.80v-2.43h0.70v2.43zM763.71 436.80v-2.21h0.70v2.21zM776.90 436.80v-2.43h0.70v2.43zM777.78 436.80v-2.22h0.70v2.22zM787.45 436.80v-0.65h0.70v0.65zM788.33 436.80v-1.21h0.70v1.21zM789.20 436.80v-2.43h0.70v2.43zM790.08 436.80v-2.14h0.70v2.14zM790.96 436.80v-2.36h0.70v2.36zM791.84 436.80v-3.64h0.70v3.64zM792.72 436.80v-2.43h0.70v2.43zM793.60 436.80v-1.68h0.70v1.68zM794.48 436.80v-4.86h0.70v4.86zM795.36 436.80v-3.99h0.70v3.99zM796.24 436.80v-1.70h0.70v1.70zM797.12 436.80v-2.43h0.70v2.43zM798.00 436.80v-2.43h0.70v2.43zM798.88 436.80v-1.95h0.70v1.95zM799.75 436.80v-4.86h0.70v4.86zM800.63 436.80v-5.11h0.70v5.11zM801.51 436.80v-4.86h0.70v4.86zM802.39 436.80v-3.60h0.70v3.60zM803.27 436.80v-8.50h0.70v8.50zM804.15 436.80v-6.89h0.70v6.89zM806.79 436.80v-0.72h0.70v0.72zM807.67 436.80v-1.21h0.70v1.21zM824.37 436.80v-1.73h0.70v1.73zM825.25 436.80v-2.43h0.70v2.43zM827.89 436.80v-2.43h0.70v2.43zM828.77 436.80v-2.22h0.70v2.22zM829.65 436.80v-1.58h0.70v1.58zM830.53 436.80v-2.43h0.70v2.43zM831.40 436.80v-2.74h0.70v2.74zM832.28 436.80v-2.43h0.70v2.43zM833.16 436.80v-4.86h0.70v4.86zM834.04 436.80v-3.79h0.70v3.79zM834.92 436.80v-5.30h0.70v5.30zM835.80 436.80v-7.28h0.70v7.28zM836.68 436.80v-2.43h0.70v2.43zM837.56 436.80v-1.53h0.70v1.53zM838.44 436.80v-3.88h0.70v3.88zM839.32 436.80v-4.86h0.70v4.86zM840.20 436.80v-2.62h0.70v2.62zM841.08 436.80v-2.43h0.70v2.43zM841.95 436.80v-2.43h0.70v2.43zM842.83 436.80v-2.43h0.70v2.43zM843.71 436.80v-1.35h0.70v1.35zM844.59 436.80v-2.43h0.70v2.43zM845.47 436.80v-2.43h0.70v2.43zM846.35 436.80v-1.53h0.70v1.53zM847.23 436.80v-4.08h0.70v4.08zM848.11 436.80v-7.28h0.70v7.28zM853.38 436.80v-17.14h0.70v17.14z" fill="#dd4f67"/>
<path d="M659.09 435.59v-0.86h0.70v0.86zM659.97 435.86v-0.79h0.70v0.79zM660.85 434.37v-5.14h0.70v5.14zM661.73 435.21v-4.13h0.70v4.13zM662.60 434.37v-5.14h0.70v5.14zM663.48 435.46v-2.45h0.70v2.45zM664.36 434.37v-4.29h0.70v4.29zM665.24 434.95v-3.25h0.70v3.25zM666.12 435.67v-4.47h0.70v4.47zM667.00 434.37v-6.86h0.70v6.86zM667.88 434.37v-5.14h0.70v5.14zM668.76 435.60v-3.39h0.70v3.39zM669.64 435.79v-2.65h0.70v2.65zM670.52 435.59v-3.43h0.70v3.43zM671.40 434.37v-5.14h0.70v5.14zM672.28 434.67v-4.51h0.70v4.51zM673.15 433.16v-6.86h0.70v6.86zM674.03 434.64v-4.22h0.70v4.22zM674.91 431.94v-10.28h0.70v10.28zM675.79 432.57v-7.02h0.70v7.02zM676.67 434.37v-3.43h0.70v3.43zM677.55 435.61v-2.47h0.70v2.47zM678.43 436.13v-2.68h0.70v2.68zM679.31 435.59v-3.43h0.70v3.43zM701.29 436.80v-1.43h0.70v1.43zM702.17 436.80v-1.71h0.70v1.71zM704.80 435.41v-2.62h0.70v2.62zM705.68 434.37v-3.43h0.70v3.43zM706.56 434.37v-6.86h0.70v6.86zM707.44 435.66v-4.39h0.70v4.39zM708.32 434.37v-8.57h0.70v8.57zM709.20 435.10v-7.76h0.70v7.76zM710.08 431.94v-5.14h0.70v5.14zM710.96 433.22v-3.71h0.70v3.71zM711.84 434.10v-5.25h0.70v5.25zM712.72 431.94v-6.86h0.70v6.86zM713.60 428.58v-13.46h0.70v13.46zM714.48 429.52v-13.71h0.70v13.71zM715.35 431.30v-5.25h0.70v5.25zM716.23 429.52v-10.28h0.70v10.28zM717.11 433.16v-5.14h0.70v5.14zM717.99 433.41v-4.01h0.70v4.01zM718.87 434.37v-6.86h0.70v6.86zM719.75 435.55v-4.32h0.70v4.32zM720.63 435.77v-0.98h0.70v0.98zM721.51 435.59v-1.71h0.70v1.71zM745.25 434.37v-3.43h0.70v3.43zM746.13 434.72v-3.59h0.70v3.59zM747.00 434.96v-4.36h0.70v4.36zM747.88 434.37v-5.14h0.70v5.14zM748.76 434.27v-6.79h0.70v6.79zM749.64 434.37v-6.86h0.70v6.86zM750.52 433.56v-9.86h0.70v9.86zM751.40 433.16v-12.00h0.70v12.00zM752.28 435.27v-4.65h0.70v4.65zM753.16 434.37v-5.14h0.70v5.14zM754.04 432.74v-3.05h0.70v3.05zM754.92 431.94v-3.43h0.70v3.43zM755.80 435.53v-3.33h0.70v3.33zM756.68 434.37v-5.14h0.70v5.14zM757.55 431.97v-6.05h0.70v6.05zM758.43 431.94v-6.86h0.70v6.86zM759.31 431.94v-6.86h0.70v6.86zM760.19 433.47v-5.44h0.70v5.44zM761.07 430.65v-3.24h0.70v3.24zM761.95 429.52v-3.43h0.70v3.43zM762.83 434.37v-1.71h0.70v1.71zM763.71 434.59v-1.57h0.70v1.57zM785.69 436.80v-1.71h0.70v1.71zM786.57 436.80v-0.99h0.70v0.99zM787.45 436.15v-1.71h0.70v1.71zM788.33 435.59v-3.43h0.70v3.43zM789.20 434.37v-6.86h0.70v6.86zM790.08 434.66v-6.53h0.70v6.53zM790.96 434.44v-7.37h0.70v7.37zM791.84 433.16v-13.71h0.70v13.71zM792.72 434.37v-10.28h0.70v10.28zM793.60 435.12v-7.55h0.70v7.55zM794.48 431.94v-6.86h0.70v6.86zM795.36 432.81v-6.06h0.70v6.06zM796.24 435.10v-7.78h0.70v7.78zM797.12 434.37v-6.86h0.70v6.86zM798.00 434.37v-8.57h0.70v8.57zM798.88 434.85v-7.90h0.70v7.90zM799.75 431.94v-6.86h0.70v6.86zM800.63 431.69v-7.74h0.70v7.74zM801.51 431.94v-5.14h0.70v5.14zM802.39 433.20v-4.00h0.70v4.00zM803.27 428.30v-3.43h0.70v3.43zM804.15 429.91v-2.88h0.70v2.88zM805.03 436.80v-3.67h0.70v3.67zM805.91 436.80v-3.43h0.70v3.43zM806.79 436.08v-1.63h0.70v1.63zM807.67 435.59v-2.57h0.70v2.57zM827.89 434.37v-3.43h0.70v3.43zM828.77 434.58v-2.94h0.70v2.94zM829.65 435.22v-2.86h0.70v2.86zM830.53 434.37v-3.43h0.70v3.43zM831.40 434.06v-12.40h0.70v12.40zM832.28 434.37v-13.71h0.70v13.71zM833.16 431.94v-6.86h0.70v6.86zM834.04 433.01v-5.65h0.70v5.65zM834.92 431.50v-6.18h0.70v6.18zM835.80 429.52v-6.86h0.70v6.86zM836.68 434.37v-12.00h0.70v12.00zM837.56 435.27v-10.23h0.70v10.23zM838.44 432.92v-3.10h0.70v3.10zM839.32 431.94v-3.43h0.70v3.43zM840.20 434.18v-4.46h0.70v4.46zM841.08 434.37v-5.14h0.70v5.14zM841.95 434.37v-2.19h0.70v2.19zM842.83 434.37v-3.43h0.70v3.43zM843.71 435.45v-3.72h0.70v3.72zM844.59 434.37v-5.14h0.70v5.14zM845.47 434.37v-3.43h0.70v3.43zM846.35 435.27v-3.13h0.70v3.13zM847.23 432.72v-1.18h0.70v1.18zM848.11 429.52v-1.71h0.70v1.71zM853.38 419.66v-8.57h0.70v8.57z" fill="#f4cc66"/>
<path d="M659.09 434.73v-3.64h0.70v3.64zM659.97 435.07v-2.67h0.70v2.67zM660.85 429.23v-8.14h0.70v8.14zM661.73 431.08v-6.96h0.70v6.96zM662.60 429.23v-26.71h0.70v26.71zM663.48 433.02v-19.42h0.70v19.42zM664.36 430.09v-24.71h0.70v24.71zM665.24 431.70v-16.12h0.70v16.12zM666.12 431.20v-16.19h0.70v16.19zM667.00 427.52v-33.57h0.70v33.57zM667.88 429.23v-49.56h0.70v49.56zM668.76 432.21v-32.20h0.70v32.20zM669.64 433.14v-24.99h0.70v24.99zM670.52 432.16v-29.64h0.70v29.64zM671.40 429.23v-12.43h0.70v12.43zM672.28 430.16v-10.15h0.70v10.15zM673.15 426.30v-20.93h0.70v20.93zM674.03 430.42v-11.08h0.70v11.08zM674.91 421.66v-33.42h0.70v33.42zM675.79 425.54v-30.68h0.70v30.68zM676.67 430.94v-14.14h0.70v14.14zM677.55 433.14v-8.13h0.70v8.13zM678.43 433.45v-10.53h0.70v10.53zM679.31 432.16v-12.50h0.70v12.50zM683.70 436.80v-2.02h0.70v2.02zM684.58 436.80v-2.86h0.70v2.86zM692.50 436.80v-2.25h0.70v2.25zM693.38 436.80v-2.86h0.70v2.86zM696.01 436.80v-5.08h0.70v5.08zM696.89 436.80v-5.71h0.70v5.71zM699.53 436.80v-3.91h0.70v3.91zM700.41 436.80v-5.71h0.70v5.71zM701.29 435.37v-4.55h0.70v4.55zM702.17 435.09v-4.00h0.70v4.00zM703.05 436.80v-5.71h0.70v5.71zM703.93 436.80v-3.22h0.70v3.22zM704.80 432.79v-8.46h0.70v8.46zM705.68 430.94v-14.14h0.70v14.14zM706.56 427.52v-39.28h0.70v39.28zM707.44 431.27v-20.54h0.70v20.54zM708.32 425.80v-23.28h0.70v23.28zM709.20 427.34v-16.59h0.70v16.59zM710.08 426.80v-24.28h0.70v24.28zM710.96 429.51v-26.82h0.70v26.82zM711.84 428.84v-28.65h0.70v28.65zM712.72 425.09v-33.99h0.70v33.99zM713.60 415.12v-19.38h0.70v19.38zM714.48 415.80v-21.85h0.70v21.85zM715.35 426.05v-35.97h0.70v35.97zM716.23 419.23v-53.85h0.70v53.85zM717.11 428.02v-34.07h0.70v34.07zM717.99 429.40v-24.55h0.70v24.55zM718.87 427.52v-30.71h0.70v30.71zM719.75 431.23v-22.45h0.70v22.45zM720.63 434.79v-2.82h0.70v2.82zM721.51 433.87v-5.64h0.70v5.64zM722.39 436.80v-8.57h0.70v8.57zM723.27 436.80v-5.92h0.70v5.92zM731.18 436.80v-2.86h0.70v2.86zM732.06 436.80v-2.30h0.70v2.30zM734.70 436.80v-1.76h0.70v1.76zM735.58 436.80v-2.86h0.70v2.86zM738.21 436.80v-14.28h0.70v14.28zM739.09 436.80v-9.52h0.70v9.52zM739.97 436.80v-5.56h0.70v5.56zM740.85 436.80v-5.71h0.70v5.71zM741.73 434.37v-0.43h0.70v0.43zM742.61 434.65v-0.38h0.70v0.38zM743.49 436.80v-2.86h0.70v2.86zM744.37 436.80v-2.75h0.70v2.75zM745.25 430.94v-5.57h0.70v5.57zM746.13 431.13v-6.04h0.70v6.04zM747.00 430.60v-18.06h0.70v18.06zM747.88 429.23v-21.00h0.70v21.00zM748.76 427.48v-23.01h0.70v23.01zM749.64 427.52v-25.00h0.70v25.00zM750.52 423.70v-27.55h0.70v27.55zM751.40 421.16v-27.21h0.70v27.21zM752.28 430.62v-25.03h0.70v25.03zM753.16 429.23v-29.57h0.70v29.57zM754.04 429.69v-15.09h0.70v15.09zM754.92 428.52v-14.57h0.70v14.57zM755.80 432.20v-14.49h0.70v14.49zM756.68 429.23v-29.57h0.70v29.57zM757.55 425.93v-31.48h0.70v31.48zM758.43 425.09v-28.28h0.70v28.28zM759.31 425.09v-22.57h0.70v22.57zM760.19 428.04v-21.84h0.70v21.84zM761.07 427.41v-14.45h0.70v14.45zM761.95 426.09v-17.85h0.70v17.85zM762.83 432.66v-10.14h0.70v10.14zM763.71 433.02v-8.67h0.70v8.67zM764.59 436.80v-1.71h0.70v1.71zM765.47 436.80v-2.86h0.70v2.86zM766.35 436.80v-2.86h0.70v2.86zM767.23 436.80v-1.88h0.70v1.88zM776.90 434.37v-0.43h0.70v0.43zM777.78 434.58v-0.30h0.70v0.30zM780.41 436.80v-2.86h0.70v2.86zM781.29 436.80v-1.53h0.70v1.53zM785.69 435.09v-2.57h0.70v2.57zM786.57 435.81v-1.11h0.70v1.11zM787.45 434.44v-2.83h0.70v2.83zM788.33 432.16v-3.93h0.70v3.93zM789.20 427.52v-47.85h0.70v47.85zM790.08 428.12v-48.92h0.70v48.92zM790.96 427.07v-14.84h0.70v14.84zM791.84 419.45v-31.21h0.70v31.21zM792.72 424.09v-30.14h0.70v30.14zM793.60 427.57v-23.19h0.70v23.19zM794.48 425.09v-48.28h0.70v48.28zM795.36 426.74v-35.07h0.70v35.07zM796.24 427.32v-19.79h0.70v19.79zM797.12 427.52v-19.28h0.70v19.28zM798.00 425.80v-37.57h0.70v37.57zM798.88 426.95v-26.17h0.70v26.17zM799.75 425.09v-14.00h0.70v14.00zM800.63 423.95v-12.37h0.70v12.37zM801.51 426.80v-35.71h0.70v35.71zM802.39 429.20v-25.41h0.70v25.41zM803.27 424.87v-42.35h0.70v42.35zM804.15 427.02v-35.58h0.70v35.58zM805.03 433.13v-5.37h0.70v5.37zM805.91 433.37v-5.14h0.70v5.14zM806.79 434.45v-9.45h0.70v9.45zM807.67 433.01v-13.35h0.70v13.35zM808.55 436.80v-3.98h0.70v3.98zM809.43 436.80v-5.71h0.70v5.71zM819.10 436.80v-2.86h0.70v2.86zM819.98 436.80v-1.62h0.70v1.62zM822.61 436.80v-12.10h0.70v12.10zM823.49 436.80v-11.43h0.70v11.43zM824.37 435.07v-8.47h0.70v8.47zM825.25 434.37v-9.00h0.70v9.00zM827.89 430.94v-11.28h0.70v11.28zM828.77 431.64v-11.42h0.70v11.42zM829.65 432.36v-7.21h0.70v7.21zM830.53 430.94v-8.43h0.70v8.43zM831.40 421.66v-30.11h0.70v30.11zM832.28 420.66v-32.42h0.70v32.42zM833.16 425.09v-28.28h0.70v28.28zM834.04 427.36v-16.15h0.70v16.15zM834.92 425.31v-13.80h0.70v13.80zM835.80 422.66v-17.28h0.70v17.28zM836.68 422.37v-54.13h0.70v54.13zM837.56 425.04v-42.97h0.70v42.97zM838.44 429.82v-27.13h0.70v27.13zM839.32 428.52v-37.42h0.70v37.42zM840.20 429.72v-27.82h0.70v27.82zM841.08 429.23v-35.28h0.70v35.28zM841.95 432.18v-18.57h0.70v18.57zM842.83 430.94v-19.85h0.70v19.85zM843.71 431.73v-15.74h0.70v15.74zM844.59 429.23v-26.71h0.70v26.71zM845.47 430.94v-17.00h0.70v17.00zM846.35 432.14v-10.82h0.70v10.82zM847.23 431.54v-3.44h0.70v3.44zM848.11 427.80v-5.28h0.70v5.28zM848.99 436.80v-5.71h0.70v5.71zM849.87 436.80v-3.49h0.70v3.49zM850.75 436.80v-5.71h0.70v5.71zM851.63 436.80v-4.95h0.70v4.95zM853.38 411.09v-48.56h0.70v48.56zM877.12 436.80v-2.18h0.70v2.18zM878.00 436.80v-2.86h0.70v2.86zM952.73 436.80v-3.20h0.70v3.20zM953.61 436.80v-2.86h0.70v2.86z" fill="#6f7176"/>
<path d="M659.00 436.80H954.40" stroke="#888a92" stroke-width="0.9"/>
<path d="M687.63 436.80v3.6" stroke="#888a92" stroke-width="0.9"/>
<text x="687.63" y="448.40" font-size="8.80" text-anchor="middle" fill="#787a82">6</text>
<path d="M729.83 436.80v3.6" stroke="#888a92" stroke-width="0.9"/>
<text x="729.83" y="448.40" font-size="8.80" text-anchor="middle" fill="#787a82">7</text>
<path d="M772.03 436.80v3.6" stroke="#888a92" stroke-width="0.9"/>
<text x="772.03" y="448.40" font-size="8.80" text-anchor="middle" fill="#787a82">8</text>
<path d="M814.23 436.80v3.6" stroke="#888a92" stroke-width="0.9"/>
<text x="814.23" y="448.40" font-size="8.80" text-anchor="middle" fill="#787a82">9</text>
<path d="M856.43 436.80v3.6" stroke="#888a92" stroke-width="0.9"/>
<text x="856.43" y="448.40" font-size="8.80" text-anchor="middle" fill="#787a82">10</text>
<path d="M898.63 436.80v3.6" stroke="#888a92" stroke-width="0.9"/>
<text x="898.63" y="448.40" font-size="8.80" text-anchor="middle" fill="#787a82">11</text>
<path d="M940.83 436.80v3.6" stroke="#888a92" stroke-width="0.9"/>
<text x="940.83" y="448.40" font-size="8.80" text-anchor="middle" fill="#787a82">12</text>
<g fill="none" stroke="#5aaed4" stroke-width="0.95"><circle cx="515.60" cy="515.00" r="3.1" fill="#d3e9f3"/><path d="M518.00 517.40L520.10 519.50" stroke-width="1.5"/><path d="M514.10 515.00h3M515.60 513.50v3" stroke-width="0.9"/></g><path d="M528.90 519.80v-4.9h1.6v-0.9h1.6v-0.9h1.6v-0.9h1.7v7.6z" fill="#6ab5d8"/><g fill="none" stroke="#5aaed4"><path d="M544.20 519.40h7.2" stroke-width="1.05"/><path d="M544.40 516.90l2.1 -4.3l1.2 3.8l1.1 -1.4l2.6 2.1z" stroke-width="0.9" stroke-linejoin="round" fill="#a9d4e8"/></g><g fill="none" stroke="#5aaed4" stroke-width="0.95"><path d="M563.20 512.30v5.4M560.40 515.10l2.8 2.6l2.8 -2.6"/><path d="M559.70 518.20v1.2h7v-1.2" stroke-width="1.0"/></g><circle cx="578.55" cy="515.80" r="3.45" fill="none" stroke="#5aaed4" stroke-width="1.0" stroke-dasharray="9.3 1.54" stroke-dashoffset="-1.2"/><path d="M582.30 515.20l0.1 -2.6l-2.5 1.0z" fill="#5aaed4"/><path d="M574.80 516.40l-0.1 2.6l2.5 -1.0z" fill="#5aaed4"/>
<text x="252.20" y="631.90" font-size="8.80" text-anchor="end" fill="#787a82">0</text>
<path d="M257.80 612.70H553.70" stroke="#e2e7f2" stroke-width="0.8"/>
<text x="252.20" y="614.70" font-size="8.80" text-anchor="end" fill="#787a82">2K</text>
<path d="M257.80 595.50H553.70" stroke="#e2e7f2" stroke-width="0.8"/>
<text x="252.20" y="597.50" font-size="8.80" text-anchor="end" fill="#787a82">4K</text>
<path d="M257.80 578.30H553.70" stroke="#e2e7f2" stroke-width="0.8"/>
<text x="252.20" y="580.30" font-size="8.80" text-anchor="end" fill="#787a82">6K</text>
<path d="M257.80 561.10H553.70" stroke="#e2e7f2" stroke-width="0.8"/>
<text x="252.20" y="563.10" font-size="8.80" text-anchor="end" fill="#787a82">8K</text>
<path d="M257.80 543.90H553.70" stroke="#e2e7f2" stroke-width="0.8"/>
<text x="252.20" y="545.90" font-size="8.80" text-anchor="end" fill="#787a82">10K</text>
<path d="M259.81 629.90v-34.40h8.30v34.40zM272.14 629.90v-28.38h8.30v28.38zM284.47 629.90v-27.52h8.30v27.52zM296.80 629.90v-24.94h8.30v24.94zM309.13 629.90v-23.22h8.30v23.22zM321.46 629.90v-21.50h8.30v21.50zM333.79 629.90v-21.50h8.30v21.50zM346.12 629.90v-19.35h8.30v19.35zM358.45 629.90v-25.80h8.30v25.80zM370.78 629.90v-25.37h8.30v25.37zM383.11 629.90v-24.51h8.30v24.51zM395.44 629.90v-24.94h8.30v24.94zM407.76 629.90v-26.66h8.30v26.66zM420.09 629.90v-36.98h8.30v36.98zM432.42 629.90v-43.00h8.30v43.00zM444.75 629.90v-56.76h8.30v56.76zM457.08 629.90v-70.95h8.30v70.95zM469.41 629.90v-68.80h8.30v68.80zM481.74 629.90v-70.95h8.30v70.95zM494.07 629.90v-72.24h8.30v72.24zM506.40 629.90v-65.36h8.30v65.36zM518.73 629.90v-63.21h8.30v63.21zM531.06 629.90v-58.05h8.30v58.05zM543.39 629.90v-43.86h8.30v43.86z" fill="#075c4c"/>
<path d="M257.80 629.90H553.70" stroke="#888a92" stroke-width="0.9"/>
<path d="M257.80 629.90v3.2" stroke="#888a92" stroke-width="0.9"/>
<path d="M282.46 629.90v3.2" stroke="#888a92" stroke-width="0.9"/>
<path d="M307.12 629.90v3.2" stroke="#888a92" stroke-width="0.9"/>
<path d="M331.78 629.90v3.2" stroke="#888a92" stroke-width="0.9"/>
<path d="M356.43 629.90v3.2" stroke="#888a92" stroke-width="0.9"/>
<path d="M381.09 629.90v3.2" stroke="#888a92" stroke-width="0.9"/>
<path d="M405.75 629.90v3.2" stroke="#888a92" stroke-width="0.9"/>
<path d="M430.41 629.90v3.2" stroke="#888a92" stroke-width="0.9"/>
<path d="M455.07 629.90v3.2" stroke="#888a92" stroke-width="0.9"/>
<path d="M479.73 629.90v3.2" stroke="#888a92" stroke-width="0.9"/>
<path d="M504.38 629.90v3.2" stroke="#888a92" stroke-width="0.9"/>
<path d="M529.04 629.90v3.2" stroke="#888a92" stroke-width="0.9"/>
<path d="M553.70 629.90v3.2" stroke="#888a92" stroke-width="0.9"/>
<text x="263.96" y="641.70" font-size="9.00" text-anchor="middle" fill="#787a82" textLength="20.60" lengthAdjust="spacingAndGlyphs">00:00</text>
<text x="288.62" y="641.70" font-size="9.00" text-anchor="middle" fill="#787a82" textLength="20.60" lengthAdjust="spacingAndGlyphs">02:00</text>
<text x="313.28" y="641.70" font-size="9.00" text-anchor="middle" fill="#787a82" textLength="20.60" lengthAdjust="spacingAndGlyphs">04:00</text>
<text x="337.94" y="641.70" font-size="9.00" text-anchor="middle" fill="#787a82" textLength="20.60" lengthAdjust="spacingAndGlyphs">06:00</text>
<text x="362.60" y="641.70" font-size="9.00" text-anchor="middle" fill="#787a82" textLength="20.60" lengthAdjust="spacingAndGlyphs">08:00</text>
<text x="387.26" y="641.70" font-size="9.00" text-anchor="middle" fill="#787a82" textLength="20.60" lengthAdjust="spacingAndGlyphs">10:00</text>
<text x="411.91" y="641.70" font-size="9.00" text-anchor="middle" fill="#787a82" textLength="20.60" lengthAdjust="spacingAndGlyphs">12:00</text>
<text x="436.57" y="641.70" font-size="9.00" text-anchor="middle" fill="#787a82" textLength="20.60" lengthAdjust="spacingAndGlyphs">14:00</text>
<text x="461.23" y="641.70" font-size="9.00" text-anchor="middle" fill="#787a82" textLength="20.60" lengthAdjust="spacingAndGlyphs">16:00</text>
<text x="485.89" y="641.70" font-size="9.00" text-anchor="middle" fill="#787a82" textLength="20.60" lengthAdjust="spacingAndGlyphs">18:00</text>
<text x="510.55" y="641.70" font-size="9.00" text-anchor="middle" fill="#787a82" textLength="20.60" lengthAdjust="spacingAndGlyphs">20:00</text>
<text x="535.21" y="641.70" font-size="9.00" text-anchor="middle" fill="#787a82" textLength="20.60" lengthAdjust="spacingAndGlyphs">22:00</text>
<g fill="none" stroke="#5aaed4" stroke-width="0.95"><circle cx="916.30" cy="515.00" r="3.1" fill="#d3e9f3"/><path d="M918.70 517.40L920.80 519.50" stroke-width="1.5"/><path d="M914.80 515.00h3M916.30 513.50v3" stroke-width="0.9"/></g><path d="M929.60 519.80v-4.9h1.6v-0.9h1.6v-0.9h1.6v-0.9h1.7v7.6z" fill="#6ab5d8"/><g fill="none" stroke="#5aaed4"><path d="M944.90 519.40h7.2" stroke-width="1.05"/><path d="M945.10 516.90l2.1 -4.3l1.2 3.8l1.1 -1.4l2.6 2.1z" stroke-width="0.9" stroke-linejoin="round" fill="#a9d4e8"/></g><g fill="none" stroke="#5aaed4" stroke-width="0.95"><path d="M963.90 512.30v5.4M961.10 515.10l2.8 2.6l2.8 -2.6"/><path d="M960.40 518.20v1.2h7v-1.2" stroke-width="1.0"/></g><circle cx="979.25" cy="515.80" r="3.45" fill="none" stroke="#5aaed4" stroke-width="1.0" stroke-dasharray="9.3 1.54" stroke-dashoffset="-1.2"/><path d="M983.00 515.20l0.1 -2.6l-2.5 1.0z" fill="#5aaed4"/><path d="M975.50 516.40l-0.1 2.6l2.5 -1.0z" fill="#5aaed4"/>
<text x="653.40" y="631.90" font-size="8.80" text-anchor="end" fill="#787a82">0</text>
<path d="M659.00 612.70H954.40" stroke="#e2e7f2" stroke-width="0.8"/>
<text x="653.40" y="614.70" font-size="8.80" text-anchor="end" fill="#787a82">500</text>
<path d="M659.00 595.50H954.40" stroke="#e2e7f2" stroke-width="0.8"/>
<text x="653.40" y="597.50" font-size="8.80" text-anchor="end" fill="#787a82">1K</text>
<path d="M659.00 578.30H954.40" stroke="#e2e7f2" stroke-width="0.8"/>
<text x="653.40" y="580.30" font-size="8.80" text-anchor="end" fill="#787a82">1.5K</text>
<path d="M659.00 561.10H954.40" stroke="#e2e7f2" stroke-width="0.8"/>
<text x="653.40" y="563.10" font-size="8.80" text-anchor="end" fill="#787a82">2K</text>
<path d="M659.00 543.90H954.40" stroke="#e2e7f2" stroke-width="0.8"/>
<text x="653.40" y="545.90" font-size="8.80" text-anchor="end" fill="#787a82">2.5K</text>
<path d="M661.00 629.90v-21.33h8.30v21.33zM673.31 629.90v-9.98h8.30v9.98zM685.62 629.90v-1.38h8.30v1.38zM697.93 629.90v-11.01h8.30v11.01zM710.24 629.90v-0.52h8.30v0.52zM722.55 629.90v-0.34h8.30v0.34zM734.85 629.90v-0.17h8.30v0.17zM747.16 629.90v-0.34h8.30v0.34zM759.47 629.90v-0.86h8.30v0.86zM771.78 629.90v-0.69h8.30v0.69zM784.09 629.90v-3.78h8.30v3.78zM796.40 629.90v-2.06h8.30v2.06zM808.70 629.90v-3.27h8.30v3.27zM821.01 629.90v-14.10h8.30v14.10zM833.32 629.90v-43.34h8.30v43.34zM845.63 629.90v-69.49h8.30v69.49zM857.94 629.90v-86.00h8.30v86.00zM870.25 629.90v-78.43h8.30v78.43zM882.55 629.90v-72.93h8.30v72.93zM894.86 629.90v-65.36h8.30v65.36zM907.17 629.90v-74.99h8.30v74.99zM919.48 629.90v-74.82h8.30v74.82zM931.79 629.90v-74.30h8.30v74.30zM944.10 629.90v-43.69h8.30v43.69z" fill="#075c4c"/>
<path d="M659.00 629.90H954.40" stroke="#888a92" stroke-width="0.9"/>
<path d="M659.00 629.90v3.2" stroke="#888a92" stroke-width="0.9"/>
<path d="M683.62 629.90v3.2" stroke="#888a92" stroke-width="0.9"/>
<path d="M708.23 629.90v3.2" stroke="#888a92" stroke-width="0.9"/>
<path d="M732.85 629.90v3.2" stroke="#888a92" stroke-width="0.9"/>
<path d="M757.47 629.90v3.2" stroke="#888a92" stroke-width="0.9"/>
<path d="M782.08 629.90v3.2" stroke="#888a92" stroke-width="0.9"/>
<path d="M806.70 629.90v3.2" stroke="#888a92" stroke-width="0.9"/>
<path d="M831.32 629.90v3.2" stroke="#888a92" stroke-width="0.9"/>
<path d="M855.93 629.90v3.2" stroke="#888a92" stroke-width="0.9"/>
<path d="M880.55 629.90v3.2" stroke="#888a92" stroke-width="0.9"/>
<path d="M905.17 629.90v3.2" stroke="#888a92" stroke-width="0.9"/>
<path d="M929.78 629.90v3.2" stroke="#888a92" stroke-width="0.9"/>
<path d="M954.40 629.90v3.2" stroke="#888a92" stroke-width="0.9"/>
<text x="665.15" y="641.70" font-size="9.00" text-anchor="middle" fill="#787a82" textLength="20.60" lengthAdjust="spacingAndGlyphs">00:00</text>
<text x="689.77" y="641.70" font-size="9.00" text-anchor="middle" fill="#787a82" textLength="20.60" lengthAdjust="spacingAndGlyphs">02:00</text>
<text x="714.39" y="641.70" font-size="9.00" text-anchor="middle" fill="#787a82" textLength="20.60" lengthAdjust="spacingAndGlyphs">04:00</text>
<text x="739.00" y="641.70" font-size="9.00" text-anchor="middle" fill="#787a82" textLength="20.60" lengthAdjust="spacingAndGlyphs">06:00</text>
<text x="763.62" y="641.70" font-size="9.00" text-anchor="middle" fill="#787a82" textLength="20.60" lengthAdjust="spacingAndGlyphs">08:00</text>
<text x="788.24" y="641.70" font-size="9.00" text-anchor="middle" fill="#787a82" textLength="20.60" lengthAdjust="spacingAndGlyphs">10:00</text>
<text x="812.85" y="641.70" font-size="9.00" text-anchor="middle" fill="#787a82" textLength="20.60" lengthAdjust="spacingAndGlyphs">12:00</text>
<text x="837.47" y="641.70" font-size="9.00" text-anchor="middle" fill="#787a82" textLength="20.60" lengthAdjust="spacingAndGlyphs">14:00</text>
<text x="862.09" y="641.70" font-size="9.00" text-anchor="middle" fill="#787a82" textLength="20.60" lengthAdjust="spacingAndGlyphs">16:00</text>
<text x="886.70" y="641.70" font-size="9.00" text-anchor="middle" fill="#787a82" textLength="20.60" lengthAdjust="spacingAndGlyphs">18:00</text>
<text x="911.32" y="641.70" font-size="9.00" text-anchor="middle" fill="#787a82" textLength="20.60" lengthAdjust="spacingAndGlyphs">20:00</text>
<text x="935.94" y="641.70" font-size="9.00" text-anchor="middle" fill="#787a82" textLength="20.60" lengthAdjust="spacingAndGlyphs">22:00</text>
</svg>
</main>
</div>
</body>
</html>
